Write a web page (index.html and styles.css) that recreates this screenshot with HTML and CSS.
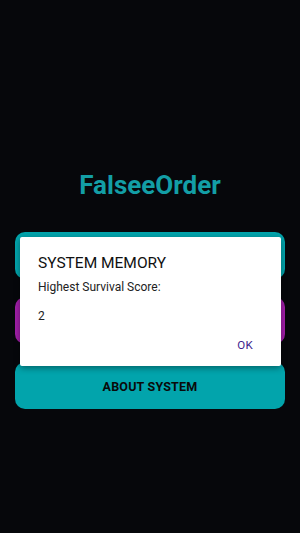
FILE: index.html
```html
<!DOCTYPE html>
<html>
<head>
<meta charset="utf-8">
<link rel="stylesheet" href="styles.css">
</head>
<body>
<div class="screen">
  <h1 class="title">FalseeOrder</h1>
  <div class="menu">
    <div class="btn btn-teal"></div>
    <div class="btn btn-magenta"></div>
    <div class="btn btn-teal">ABOUT SYSTEM</div>
  </div>
  <div class="dialog">
    <div class="dlg-title">SYSTEM MEMORY</div>
    <div class="dlg-text">Highest Survival Score:</div>
    <div class="dlg-score">2</div>
    <div class="dlg-actions"><span class="dlg-ok">OK</span></div>
  </div>
</div>
</body>
</html>
```
FILE: styles.css
```css
html, body {
  margin: 0;
  padding: 0;
  background: #06070b;
}
.screen {
  position: relative;
  width: 300px;
  height: 533px;
  background: #06070b;
  font-family: Roboto, "Noto Sans", sans-serif;
  padding-top: 170px;
  box-sizing: border-box;
}
.title {
  margin: 0;
  text-align: center;
  font-size: 26px;
  line-height: 30px;
  font-weight: 700;
  color: #139ea6;
}
.menu {
  display: flex;
  flex-direction: column;
  gap: 18px;
  margin: 32px 15px 0;
}
.btn {
  height: 47px;
  border-radius: 10px;
  display: flex;
  align-items: center;
  justify-content: center;
  font-size: 12.5px;
  font-weight: 700;
  color: #0a0a0a;
  letter-spacing: 0.2px;
  padding-top: 2px;
  box-sizing: border-box;
}
.btn-teal { background: #02a4ac; }
.btn-magenta { background: #a01ea8; }
.dialog {
  position: absolute;
  left: 20px;
  top: 237px;
  width: 261px;
  height: 129px;
  box-sizing: border-box;
  background: #ffffff;
  border-radius: 2px;
  padding: 16px 18px 13px 18px;
  box-shadow: 0 2px 6px rgba(0,0,0,0.4);
  color: #111;
}
.dlg-title {
  font-size: 15.5px;
  line-height: 20px;
  color: #111;
}
.dlg-text {
  margin-top: 6px;
  font-size: 12px;
  line-height: 16px;
  color: #222;
}
.dlg-score {
  margin-top: 13px;
  font-size: 12px;
  line-height: 16px;
  color: #222;
}
.dlg-actions {
  margin-top: 13px;
  display: flex;
  justify-content: flex-end;
  padding-right: 10px;
}
.dlg-ok {
  font-size: 11.5px;
  line-height: 16px;
  font-weight: 400;
  color: #3d1d8e;
  letter-spacing: 0.3px;
}
```
